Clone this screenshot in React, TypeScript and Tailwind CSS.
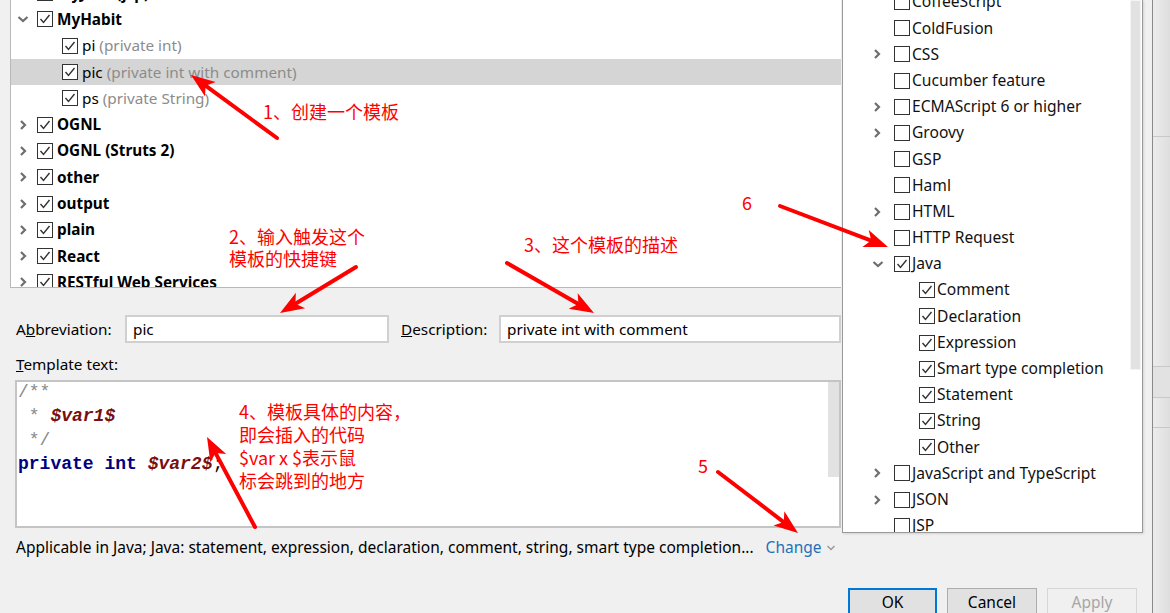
import React from "react";

const ui = { fontFamily: '"Noto Sans", "Liberation Sans", sans-serif' };
const cjk = { fontFamily: '"Noto Sans CJK SC", "Noto Sans", sans-serif' };
const mono = { fontFamily: '"Liberation Mono", "DejaVu Sans Mono", monospace' };

type Row = {
  label: string;
  hint?: string;
  level: 0 | 1;
  expand?: "right" | "down";
  checked: boolean;
  bold?: boolean;
  selected?: boolean;
};

const treeRows: Row[] = [
  { label: "MyJava (jsp)", level: 0, expand: "right", checked: true, bold: true },
  { label: "MyHabit", level: 0, expand: "down", checked: true, bold: true },
  { label: "pi", hint: "(private int)", level: 1, checked: true },
  { label: "pic", hint: "(private int with comment)", level: 1, checked: true, selected: true },
  { label: "ps", hint: "(private String)", level: 1, checked: true },
  { label: "OGNL", level: 0, expand: "right", checked: true, bold: true },
  { label: "OGNL (Struts 2)", level: 0, expand: "right", checked: true, bold: true },
  { label: "other", level: 0, expand: "right", checked: true, bold: true },
  { label: "output", level: 0, expand: "right", checked: true, bold: true },
  { label: "plain", level: 0, expand: "right", checked: true, bold: true },
  { label: "React", level: 0, expand: "right", checked: true, bold: true },
  { label: "RESTful Web Services", level: 0, expand: "right", checked: true, bold: true },
];

const contextRows: Row[] = [
  { label: "CoffeeScript", level: 0, checked: false },
  { label: "ColdFusion", level: 0, checked: false },
  { label: "CSS", level: 0, expand: "right", checked: false },
  { label: "Cucumber feature", level: 0, checked: false },
  { label: "ECMAScript 6 or higher", level: 0, expand: "right", checked: false },
  { label: "Groovy", level: 0, expand: "right", checked: false },
  { label: "GSP", level: 0, checked: false },
  { label: "Haml", level: 0, checked: false },
  { label: "HTML", level: 0, expand: "right", checked: false },
  { label: "HTTP Request", level: 0, checked: false },
  { label: "Java", level: 0, expand: "down", checked: true },
  { label: "Comment", level: 1, checked: true },
  { label: "Declaration", level: 1, checked: true },
  { label: "Expression", level: 1, checked: true },
  { label: "Smart type completion", level: 1, checked: true },
  { label: "Statement", level: 1, checked: true },
  { label: "String", level: 1, checked: true },
  { label: "Other", level: 1, checked: true },
  { label: "JavaScript and TypeScript", level: 0, expand: "right", checked: false },
  { label: "JSON", level: 0, expand: "right", checked: false },
  { label: "JSP", level: 0, checked: false },
];

function Chevron({ dir }: { dir: "right" | "down" }) {
  return dir === "right" ? (
    <svg width="10" height="12" viewBox="0 0 10 12">
      <polyline points="3,2 7,6 3,10" fill="none" stroke="#6e6e6e" strokeWidth="2.2" />
    </svg>
  ) : (
    <svg width="12" height="10" viewBox="0 0 12 10">
      <polyline points="1.5,3 6,7 10.5,3" fill="none" stroke="#6e6e6e" strokeWidth="2.2" />
    </svg>
  );
}

function Checkbox({ checked }: { checked: boolean }) {
  return (
    <span className="inline-flex w-[16px] h-[16px] shrink-0 border border-[#333333] bg-white items-center justify-center">
      {checked && (
        <svg width="14" height="14" viewBox="0 0 14 14">
          <polyline points="2.5,7 5.5,10.5 11.5,3" fill="none" stroke="#333333" strokeWidth="1.4" />
        </svg>
      )}
    </span>
  );
}

function TreeRow({ row }: { row: Row }) {
  return (
    <div className={`h-[26.3px] flex items-center ${row.selected ? "bg-[#d5d5d5]" : ""}`}>
      <div className={`${row.level === 1 ? "w-[51px]" : "w-[26px]"} flex justify-center shrink-0 pr-[3px]`}>
        {row.expand && <Chevron dir={row.expand} />}
      </div>
      <Checkbox checked={row.checked} />
      <span className={`ml-[4px] whitespace-nowrap text-[15.3px] text-black ${row.bold ? "font-bold" : ""}`}>
        {row.label}
        {row.hint && <span className="text-[#8c8c8c]"> {row.hint}</span>}
      </span>
    </div>
  );
}

function ContextRow({ row }: { row: Row }) {
  return (
    <div className="h-[26.2px] flex items-center">
      {row.level === 1 ? (
        <div className="w-[76px] shrink-0" />
      ) : (
        <div className="w-[51px] shrink-0 pl-[29px] flex items-center">{row.expand && <Chevron dir={row.expand} />}</div>
      )}
      <Checkbox checked={row.checked} />
      <span className="ml-[2px] whitespace-nowrap text-[15.6px] text-[#111111]">{row.label}</span>
    </div>
  );
}

function Arrow({ x1, y1, x2, y2 }: { x1: number; y1: number; x2: number; y2: number }) {
  const dx = x2 - x1;
  const dy = y2 - y1;
  const len = Math.hypot(dx, dy);
  const ux = dx / len;
  const uy = dy / len;
  const hl = 24;
  const hw = 9;
  const bx = x2 - ux * hl;
  const by = y2 - uy * hl;
  const notchX = x2 - ux * (hl - 6);
  const notchY = y2 - uy * (hl - 6);
  return (
    <g>
      <line x1={x1} y1={y1} x2={notchX} y2={notchY} stroke="#ff0000" strokeWidth="4" strokeLinecap="round" />
      <polygon
        points={`${x2},${y2} ${bx - uy * hw},${by + ux * hw} ${notchX},${notchY} ${bx + uy * hw},${by - ux * hw}`}
        fill="#ff0000"
      />
    </g>
  );
}

export default function App() {
  return (
    <div className="relative w-[1170px] h-[613px] overflow-hidden flex bg-[#f0f0f0]" style={ui}>
      {/* dialog */}
      <div className="w-[1153px] h-full flex flex-col border-r border-[#8a8a8a]">
        <div className="w-[831px] ml-[10px] flex flex-col">
          {/* template tree */}
          <div className="h-[288px] bg-white border-l border-b border-[#b9b9b9] overflow-hidden">
            <div className="-mt-[20px]">
              {treeRows.map((r) => (
                <TreeRow key={r.label} row={r} />
              ))}
            </div>
          </div>

          {/* abbreviation / description */}
          <div className="mt-[27px] h-[28px] flex items-center text-[15.3px] text-black">
            <span className="ml-[6px] w-[109px]">
              A<u>b</u>breviation:
            </span>
            <div className="w-[264px] h-[28px] bg-white border-2 border-[#d0d0d0] flex items-center pl-[6px]">pic</div>
            <span className="ml-[12px] w-[98px]">
              <u>D</u>escription:
            </span>
            <div className="flex-1 h-[28px] bg-white border-2 border-[#d0d0d0] flex items-center pl-[6px]">
              private int with comment
            </div>
          </div>

          <div className="mt-[10px] h-[22px] flex items-center ml-[6px] text-[15.3px] text-black">
            <span>
              <u>T</u>emplate text:
            </span>
          </div>

          {/* template text */}
          <div className="mt-[5px] ml-[5px] h-[148px] bg-white border-2 border-[#c4c4c4] flex">
            <pre className="flex-1 -mt-[2px] pl-[1px] text-[18px] leading-[24px]" style={mono}>
              <div className="text-[#8a8a8a]">/**</div>
              <div>
                <span className="text-[#8a8a8a]"> * </span>
                <span className="text-[#7a0f0f] font-bold italic">$var1$</span>
              </div>
              <div className="text-[#8a8a8a]"> */</div>
              <div>
                <span className="text-[#000080] font-bold">private int </span>
                <span className="text-[#7a0f0f] font-bold italic">$var2$</span>
                <span className="text-black">;</span>
              </div>
            </pre>
            <div className="w-[11px] h-[97px] bg-[#e2e2e2] border-b-2 border-white" />
          </div>

          {/* applicable contexts */}
          <div className="mt-[9px] h-[22px] flex items-center ml-[6px] text-[15.5px] text-black whitespace-nowrap">
            <span>Applicable in Java; Java: statement, expression, declaration, comment, string, smart type completion...</span>
            <span className="ml-[12px] text-[15.5px] text-[#2470b8]">Change</span>
            <svg className="ml-[4px]" width="10" height="8" viewBox="0 0 10 8">
              <polyline points="1.5,2 5,5.5 8.5,2" fill="none" stroke="#9a9a9a" strokeWidth="1.5" />
            </svg>
          </div>
        </div>

        {/* buttons */}
        <div className="mt-[29px] flex justify-end gap-[10px] pr-[15px] text-[15.5px]">
          <button className="w-[89px] h-[30px] bg-[#e1e1e1] border-2 border-[#0078d7] text-black">OK</button>
          <button className="w-[90px] h-[30px] bg-[#e1e1e1] border border-[#adadad] text-black">Cancel</button>
          <button className="w-[90px] h-[30px] bg-[#f0f0f0] border border-[#d6d6d6] text-[#a6a6a6]">Apply</button>
        </div>
      </div>

      {/* window behind */}
      <div className="flex-1 h-full flex flex-col bg-gradient-to-r from-[#ececec] to-[#dedede]">
        <div className="h-[137px] border-b border-[#c8c8c8]" />
        <div className="h-[230px] border-b border-[#c8c8c8]" />
        <div className="h-[31px] bg-[#e2e2e2] border-b border-[#c8c8c8]" />
        <div className="h-[30px] border-b border-[#c8c8c8]" />
      </div>

      {/* context popup */}
      <div className="absolute left-[842px] top-0 w-[301px] h-[533px] bg-white border border-[#999999] border-t-0 shadow-[1px_1px_2px_rgba(0,0,0,0.12)] overflow-hidden">
        <div className="-mt-[11px]">
          {contextRows.map((r) => (
            <ContextRow key={r.label} row={r} />
          ))}
        </div>
        <div className="absolute right-[1px] top-0 w-[11px] h-[370px] bg-[#e2e2e2] border border-[#f4f4f4]" />
      </div>

      {/* annotations */}
      <svg className="absolute inset-0 pointer-events-none" width="1170" height="613">
        <Arrow x1={277} y1={138} x2={191} y2={75} />
        <Arrow x1={356} y1={267} x2={280} y2={313} />
        <Arrow x1={507} y1={263} x2={594} y2={313} />
        <Arrow x1={255} y1={527} x2={207} y2={437} />
        <Arrow x1={718} y1={472} x2={798} y2={533} />
        <Arrow x1={780} y1={206} x2={888} y2={247} />
      </svg>
      <div className="absolute left-[263px] top-[100px] text-[18px] leading-[23px] text-[#ff0000]" style={cjk}>
        1、创建一个模板
      </div>
      <div className="absolute left-[229px] top-[225px] text-[18px] leading-[22px] text-[#ff0000]" style={cjk}>
        <div>2、输入触发这个</div>
        <div>模板的快捷键</div>
      </div>
      <div className="absolute left-[524px] top-[233px] text-[18px] leading-[23px] text-[#ff0000]" style={cjk}>
        3、这个模板的描述
      </div>
      <div className="absolute left-[239px] top-[400px] text-[18px] leading-[23px] text-[#ff0000]" style={cjk}>
        <div>4、模板具体的内容，</div>
        <div>即会插入的代码</div>
        <div>$var x $表示鼠</div>
        <div>标会跳到的地方</div>
      </div>
      <div className="absolute left-[698px] top-[454px] text-[18px] leading-[23px] text-[#ff0000]" style={cjk}>
        5
      </div>
      <div className="absolute left-[742px] top-[191px] text-[18px] leading-[23px] text-[#ff0000]" style={cjk}>
        6
      </div>
    </div>
  );
}
